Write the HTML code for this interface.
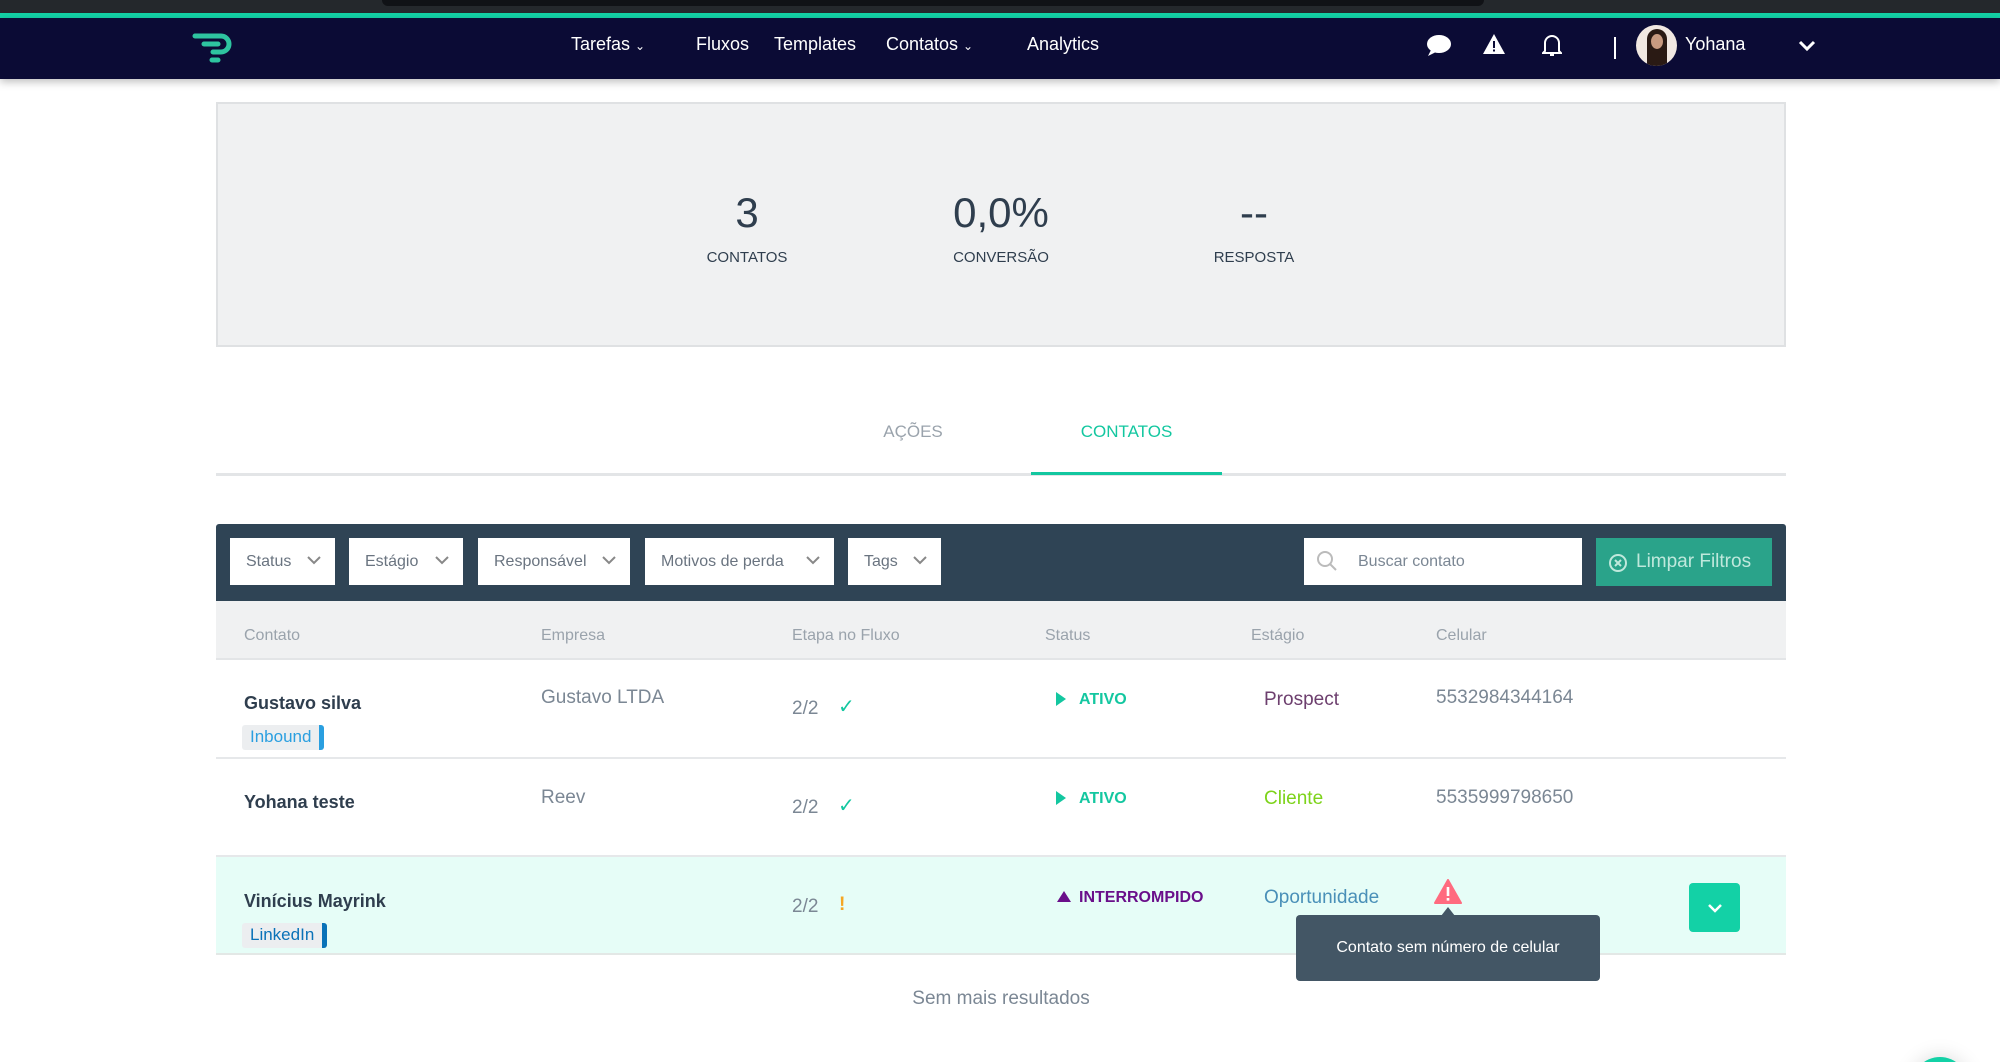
<!DOCTYPE html>
<html><head><meta charset="utf-8"><style>
*{box-sizing:border-box;margin:0;padding:0}
html{height:1062px;overflow:hidden}
body{width:2000px;height:1062px;overflow:hidden;background:#fff;font-family:"Liberation Sans",sans-serif;position:relative;color:#2f3e4e}
.a{position:absolute;white-space:nowrap}
.nav{position:absolute;left:0;top:18px;width:2000px;height:61px;background:#0b0b35;box-shadow:0 3px 8px rgba(0,0,0,.25)}
.nav .a{color:#fff;font-size:18px;top:16px}
.hd{font-size:16px;color:#9aa3ac;top:627px}
.fb{position:absolute;top:538px;height:47px;background:#fff;font-size:16px;color:#6a7480;padding:15px 0 0 16px}
.fb svg{position:absolute;right:14px;top:18px}
.nm{font-size:18px;font-weight:bold;color:#2f3e4e}
.cell{font-size:19px;color:#7b8794}
</style></head><body>
<div class="a" style="left:0;top:0;width:2000px;height:13px;background:#24282c"></div>
<div class="a" style="left:382px;top:0;width:1102px;height:6px;background:#101216;border-radius:0 0 8px 8px"></div>
<div class="a" style="left:0;top:13px;width:2000px;height:5px;background:#13d1a6"></div>
<div class="nav">
<svg class="a" style="left:192px;top:14px" width="42" height="32" viewBox="0 0 42 32"><path d="M3 4h26a8 8 0 0 1 0 16h-8M12 12h14M20 28h6" stroke="#2ec4a0" stroke-width="5" fill="none" stroke-linecap="round"/></svg>
<div class="a" style="left:571px">Tarefas <span style="font-size:12px">⌄</span></div>
<div class="a" style="left:696px">Fluxos</div>
<div class="a" style="left:774px">Templates</div>
<div class="a" style="left:886px">Contatos <span style="font-size:12px">⌄</span></div>
<div class="a" style="left:1027px">Analytics</div>
<svg class="a" style="left:1426px;top:16px" width="26" height="24" viewBox="0 0 26 24"><ellipse cx="13" cy="10" rx="12" ry="9" fill="#fff"/><path d="M5 16l-3 6 8-4z" fill="#fff"/></svg>
<svg class="a" style="left:1482px;top:15px" width="24" height="22" viewBox="0 0 24 22"><path d="M12 1L23 21H1z" fill="#fff"/><rect x="11" y="8" width="2" height="7" fill="#0b0b35"/><rect x="11" y="16.5" width="2" height="2" fill="#0b0b35"/></svg>
<svg class="a" style="left:1542px;top:14px" width="20" height="26" viewBox="0 0 20 26"><path d="M3 19V11a7 7 0 0 1 14 0v8l2 2H1z M8 23h4" stroke="#fff" stroke-width="2" fill="none"/></svg>
<div class="a" style="left:1614px;top:19px;width:2px;height:22px;background:#fff"></div>
<div class="a" style="left:1636px;top:7px;width:41px;height:41px;border-radius:50%;background:#f1e8e2;overflow:hidden"><div style="position:absolute;left:11px;top:4px;width:20px;height:37px;border-radius:10px 10px 0 0;background:#2a1a14"></div><div style="position:absolute;left:15px;top:9px;width:12px;height:15px;border-radius:50%;background:#c89a80"></div></div>
<div class="a" style="left:1685px">Yohana</div>
<svg class="a" style="left:1798px;top:22px" width="18" height="12" viewBox="0 0 18 12"><path d="M2 2l7 7 7-7" stroke="#fff" stroke-width="3" fill="none"/></svg>
</div>
<div class="a" style="left:216px;top:102px;width:1570px;height:245px;background:#f0f1f2;border:2px solid #dfe1e3"></div>
<div class="a" style="left:697px;top:189px;width:100px;text-align:center;font-size:42px;color:#2f3e4e">3</div>
<div class="a" style="left:697px;top:249px;width:100px;text-align:center;font-size:15px">CONTATOS</div>
<div class="a" style="left:921px;top:189px;width:160px;text-align:center;font-size:42px">0,0%</div>
<div class="a" style="left:921px;top:249px;width:160px;text-align:center;font-size:15px">CONVERSÃO</div>
<div class="a" style="left:1174px;top:189px;width:160px;text-align:center;font-size:42px">--</div>
<div class="a" style="left:1174px;top:249px;width:160px;text-align:center;font-size:15px">RESPOSTA</div>
<div class="a" style="left:863px;top:422px;width:100px;text-align:center;font-size:17px;color:#9aa3ac">AÇÕES</div>
<div class="a" style="left:1031px;top:422px;width:191px;text-align:center;font-size:17px;color:#13c7a0">CONTATOS</div>
<div class="a" style="left:216px;top:473px;width:1570px;height:3px;background:#e3e5e7"></div>
<div class="a" style="left:1031px;top:472px;width:191px;height:3px;background:#13c7a0"></div>
<div class="a" style="left:216px;top:524px;width:1570px;height:77px;background:#2f4455;border-radius:3px 3px 0 0"></div>
<div class="fb" style="left:230px;width:105px">Status<svg width="14" height="9" viewBox="0 0 14 9"><path d="M1 1l6 6 6-6" stroke="#888" stroke-width="2" fill="none"/></svg></div>
<div class="fb" style="left:349px;width:114px">Estágio<svg width="14" height="9" viewBox="0 0 14 9"><path d="M1 1l6 6 6-6" stroke="#888" stroke-width="2" fill="none"/></svg></div>
<div class="fb" style="left:478px;width:152px">Responsável<svg width="14" height="9" viewBox="0 0 14 9"><path d="M1 1l6 6 6-6" stroke="#888" stroke-width="2" fill="none"/></svg></div>
<div class="fb" style="left:645px;width:189px">Motivos de perda<svg width="14" height="9" viewBox="0 0 14 9"><path d="M1 1l6 6 6-6" stroke="#888" stroke-width="2" fill="none"/></svg></div>
<div class="fb" style="left:848px;width:93px">Tags<svg width="14" height="9" viewBox="0 0 14 9"><path d="M1 1l6 6 6-6" stroke="#888" stroke-width="2" fill="none"/></svg></div>
<div class="fb" style="left:1304px;width:278px;padding-left:54px;color:#7b8794">Buscar contato<svg style="left:12px;top:12px;right:auto" width="22" height="22" viewBox="0 0 22 22"><circle cx="9" cy="9" r="7" stroke="#bbb" stroke-width="2" fill="none"/><path d="M14 14l6 6" stroke="#bbb" stroke-width="2"/></svg></div>
<div class="a" style="left:1596px;top:538px;width:176px;height:48px;background:#2aa38a;color:#bfe8dc;font-size:19px;padding:13px 0 0 40px">Limpar Filtros<svg style="position:absolute;left:12px;top:15px" width="20" height="20" viewBox="0 0 20 20"><circle cx="10" cy="10" r="8" stroke="#bfe8dc" stroke-width="2" fill="none"/><path d="M7 7l6 6M13 7l-6 6" stroke="#bfe8dc" stroke-width="2"/></svg></div>
<div class="a" style="left:216px;top:601px;width:1570px;height:59px;background:#f0f1f2;border-bottom:2px solid #e3e5e7"></div>
<div class="a hd" style="left:244px">Contato</div>
<div class="a hd" style="left:541px">Empresa</div>
<div class="a hd" style="left:792px">Etapa no Fluxo</div>
<div class="a hd" style="left:1045px">Status</div>
<div class="a hd" style="left:1251px">Estágio</div>
<div class="a hd" style="left:1436px">Celular</div>
<div class="a" style="left:216px;top:757px;width:1570px;height:2px;background:#e6e8ea"></div>
<div class="a nm" style="left:244px;top:693px">Gustavo silva</div>
<div class="a" style="left:242px;top:725px;height:25px;padding:2px 8px;background:#eceef0;border-right:5px solid #2a9fe0;border-radius:3px;font-size:17px;color:#2a9fe0">Inbound</div>
<div class="a cell" style="left:541px;top:687px">Gustavo LTDA</div>
<div class="a cell" style="left:792px;top:698px">2/2</div>
<div class="a" style="left:838px;top:694px;color:#13c7a0;font-size:20px">✓</div>
<div class="a" style="left:1056px;top:692px;width:0;height:0;border-left:10px solid #13c7a0;border-top:7px solid transparent;border-bottom:7px solid transparent"></div>
<div class="a" style="left:1079px;top:691px;color:#13c7a0;font-size:16px;font-weight:bold">ATIVO</div>
<div class="a cell" style="left:1264px;top:689px;color:#6d3f6e">Prospect</div>
<div class="a cell" style="left:1436px;top:687px">5532984344164</div>
<div class="a" style="left:216px;top:855px;width:1570px;height:2px;background:#e6e8ea"></div>
<div class="a nm" style="left:244px;top:792px">Yohana teste</div>
<div class="a cell" style="left:541px;top:787px">Reev</div>
<div class="a cell" style="left:792px;top:797px">2/2</div>
<div class="a" style="left:838px;top:793px;color:#13c7a0;font-size:20px">✓</div>
<div class="a" style="left:1056px;top:791px;width:0;height:0;border-left:10px solid #13c7a0;border-top:7px solid transparent;border-bottom:7px solid transparent"></div>
<div class="a" style="left:1079px;top:790px;color:#13c7a0;font-size:16px;font-weight:bold">ATIVO</div>
<div class="a cell" style="left:1264px;top:788px;color:#7dd31a">Cliente</div>
<div class="a cell" style="left:1436px;top:787px">5535999798650</div>
<div class="a" style="left:216px;top:857px;width:1570px;height:98px;background:#e6fdf7;border-bottom:2px solid #e3e8e6"></div>
<div class="a nm" style="left:244px;top:891px">Vinícius Mayrink</div>
<div class="a" style="left:242px;top:923px;height:25px;padding:2px 8px;background:#eceef0;border-right:5px solid #0a72b8;border-radius:3px;font-size:17px;color:#0a72b8">LinkedIn</div>
<div class="a cell" style="left:792px;top:896px">2/2</div>
<div class="a" style="left:839px;top:894px;color:#f5a623;font-size:19px;font-weight:bold">!</div>
<div class="a" style="left:1057px;top:891px;width:0;height:0;border-bottom:11px solid #6a0f8a;border-left:7px solid transparent;border-right:7px solid transparent"></div>
<div class="a" style="left:1079px;top:889px;color:#6a0f8a;font-size:16px;font-weight:bold">INTERROMPIDO</div>
<div class="a cell" style="left:1264px;top:887px;color:#4a90b8">Oportunidade</div>
<svg class="a" style="left:1434px;top:879px" width="28" height="25" viewBox="0 0 28 25"><path d="M14 1L27 24H1z" fill="#ff6b7f" stroke="#ff6b7f" stroke-linejoin="round" stroke-width="2"/><rect x="12.7" y="8" width="2.6" height="9" fill="#fff"/><rect x="12.7" y="19" width="2.6" height="2.6" fill="#fff"/></svg>
<div class="a" style="left:1689px;top:883px;width:51px;height:49px;background:#13d1a6;border-radius:4px"><svg style="position:absolute;left:18px;top:20px" width="16" height="10" viewBox="0 0 16 10"><path d="M2 2l6 6 6-6" stroke="#fff" stroke-width="2.5" fill="none"/></svg></div>
<div class="a" style="left:1441px;top:907px;width:0;height:0;border-bottom:9px solid #435665;border-left:7px solid transparent;border-right:7px solid transparent"></div>
<div class="a" style="left:1296px;top:915px;width:304px;height:66px;background:#435665;border-radius:4px;color:#fff;font-size:16px;text-align:center;padding-top:24px">Contato sem número de celular</div>
<div class="a" style="left:851px;top:988px;width:300px;text-align:center;font-size:19px;color:#7b8794">Sem mais resultados</div>
<div class="a" style="left:1912px;top:1057px;width:56px;height:56px;border-radius:50%;background:#13d1a6;box-shadow:0 0 20px rgba(0,0,0,.15)"></div>
</body></html>
